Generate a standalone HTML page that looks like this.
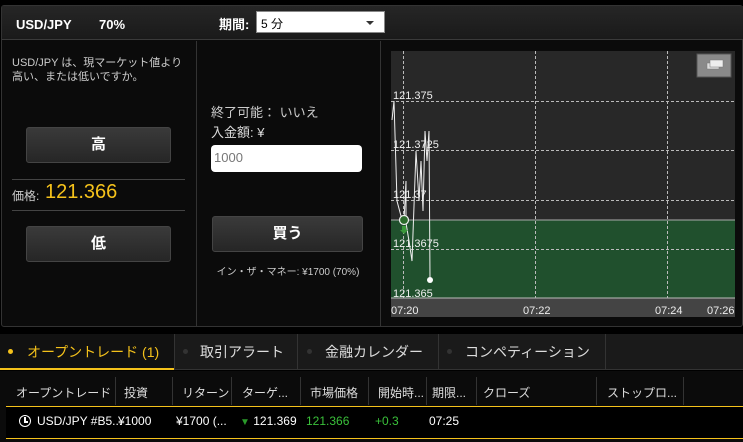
<!DOCTYPE html>
<html><head><meta charset="utf-8"><style>
*{box-sizing:border-box;margin:0;padding:0}
body{width:743px;height:442px;background:#000;font-family:"Liberation Sans","Noto Sans CJK JP",sans-serif;color:#ddd;position:relative;overflow:hidden}
.a{position:absolute}
.btn{position:absolute;background:linear-gradient(#3a3a3a,#262626);border:1px solid #444;border-radius:3px;color:#fff;font-weight:bold;font-size:15px;text-align:center}
</style></head><body>
<div class="a" style="left:1px;top:5px;width:742px;height:322px;background:#0b0b0b;border:1px solid #333;border-radius:3px"></div>
<div class="a" style="left:2px;top:6px;width:741px;height:34px;background:linear-gradient(#262626,#1a1a1a);border-bottom:1px solid #3a3a3a"></div>
<div class="a" style="left:16px;top:17px;font-size:13px;font-weight:bold;color:#fff">USD/JPY</div>
<div class="a" style="left:99px;top:17px;font-size:13px;font-weight:bold;color:#fff">70%</div>
<div class="a" style="left:219px;top:14px;font-size:13px;font-weight:bold;color:#fff">期間:</div>
<div class="a" style="left:256px;top:11px;width:129px;height:22px;background:#fff;border:1px solid #888;font-size:12px;color:#000;padding:3px 0 0 4px">5 分<span class="a" style="right:10px;top:9px;width:0;height:0;border-left:4px solid transparent;border-right:4px solid transparent;border-top:4px solid #333"></span></div>
<div class="a" style="left:196px;top:41px;width:1px;height:286px;background:#333"></div>
<div class="a" style="left:380px;top:41px;width:1px;height:286px;background:#333"></div>
<div class="a" style="left:12px;top:56px;font-size:11px;line-height:14px;color:#ccc;width:172px">USD/JPY は、現マーケット値より高い、または低いですか。</div>
<div class="btn" style="left:26px;top:127px;width:145px;height:36px;line-height:34px">高</div>
<div class="a" style="left:12px;top:179px;width:173px;height:1px;background:#444"></div>
<div class="a" style="left:12px;top:187px;font-size:12px;color:#ccc">価格:</div>
<div class="a" style="left:45px;top:181px;font-size:20px;color:#f5c21b">121.366</div>
<div class="a" style="left:12px;top:210px;width:173px;height:1px;background:#444"></div>
<div class="btn" style="left:26px;top:226px;width:145px;height:36px;line-height:34px">低</div>
<div class="a" style="left:211px;top:102px;font-size:13px;color:#ccc">終了可能： いいえ</div>
<div class="a" style="left:211px;top:122px;font-size:13px;color:#ddd">入金額: ¥</div>
<div class="a" style="left:211px;top:145px;width:151px;height:27px;background:#fff;border-radius:4px;font-size:13px;color:#777;padding:5px 0 0 3px">1000</div>
<div class="btn" style="left:212px;top:216px;width:151px;height:36px;line-height:34px">買う</div>
<div class="a" style="left:208px;top:263px;width:160px;font-size:10px;color:#ccc;text-align:center">イン・ザ・マネー: ¥1700 (70%)</div>
<svg class="a" style="left:391px;top:51px" width="344" height="266">
<rect width="344" height="266" fill="#282828"/>
<rect y="169" width="344" height="78" fill="#20502d"/>
<line x1="0" y1="169" x2="344" y2="169" stroke="#aaa"/>
<g stroke="#bbb" stroke-dasharray="3,2" stroke-width="1">
<line x1="0" y1="50.5" x2="344" y2="50.5"/><line x1="0" y1="99.5" x2="344" y2="99.5"/><line x1="0" y1="149.5" x2="344" y2="149.5"/><line x1="0" y1="198.5" x2="344" y2="198.5"/>
<line x1="12.5" y1="0" x2="12.5" y2="247"/><line x1="144.5" y1="0" x2="144.5" y2="247"/><line x1="276.5" y1="0" x2="276.5" y2="247"/>
</g>
<rect x="0" y="247" width="344" height="19" fill="#444"/>
<line x1="0" y1="247" x2="344" y2="247" stroke="#bbb"/>
<g fill="#eee" font-size="11" font-family="Liberation Sans,sans-serif">
<text x="2" y="48">121.375</text><text x="2" y="97">121.3725</text><text x="2" y="147">121.37</text><text x="2" y="196">121.3675</text><text x="2" y="246">121.365</text>
<text x="0" y="263">07:20</text><text x="132" y="263">07:22</text><text x="264" y="263">07:24</text><text x="316" y="263">07:26</text>
</g>
<polyline fill="none" stroke="#eee" stroke-width="1" points="1,69 3,50 6,150 10,165 13,170 15,130 15,172 18,190 21,210 25,100 28,150 30,110 32,160 34,80 36,110 38,80 39,228"/>
<circle cx="13" cy="169" r="4.5" fill="#2a6a2a" stroke="#eee" stroke-width="1.2"/>
<path d="M11 175h4v4h2l-4 4-4-4h2z" fill="#3a9a3a"/>
<circle cx="39" cy="229" r="3" fill="#fff"/>
<rect x="306" y="3" width="34" height="23" fill="#8a8a8a" stroke="#555"/>
<rect x="316" y="12" width="12" height="6" fill="#ddd" stroke="#777" stroke-width=".5"/>
<rect x="319" y="9" width="13" height="7" fill="#eee" stroke="#777" stroke-width=".5"/>
</svg>
<div class="a" style="left:0;top:334px;width:743px;height:36px;background:#1a1a1a;border-bottom:1px solid #333"></div>
<div class="a" style="left:0;top:334px;width:174px;height:36px;background:#111;border-bottom:2px solid #f5c21b"></div>
<div class="a" style="left:174px;top:334px;width:1px;height:36px;background:#333"></div>
<div class="a" style="left:297px;top:334px;width:1px;height:36px;background:#333"></div>
<div class="a" style="left:438px;top:334px;width:1px;height:36px;background:#333"></div>
<div class="a" style="left:605px;top:334px;width:1px;height:36px;background:#333"></div>
<div class="a" style="left:8px;top:349px;width:5px;height:5px;border-radius:50%;background:#f5c21b"></div>
<div class="a" style="left:27px;top:342px;font-size:14px;color:#f5c21b">オープントレード (1)</div>
<div class="a" style="left:183px;top:349px;width:5px;height:5px;border-radius:50%;background:#333"></div>
<div class="a" style="left:200px;top:342px;font-size:14px;color:#ddd">取引アラート</div>
<div class="a" style="left:307px;top:349px;width:5px;height:5px;border-radius:50%;background:#333"></div>
<div class="a" style="left:325px;top:342px;font-size:14px;color:#ddd">金融カレンダー</div>
<div class="a" style="left:447px;top:349px;width:5px;height:5px;border-radius:50%;background:#333"></div>
<div class="a" style="left:465px;top:342px;font-size:14px;color:#ddd">コンペティーション</div>
<div class="a" style="left:0;top:371px;width:743px;height:71px;background:#0b0b0b"></div>
<div style="font-size:12px;color:#ddd">
<div class="a" style="left:16px;top:384px">オープントレード</div>
<div class="a" style="left:124px;top:384px">投資</div>
<div class="a" style="left:182px;top:384px">リターン</div>
<div class="a" style="left:242px;top:384px">ターゲ...</div>
<div class="a" style="left:310px;top:384px">市場価格</div>
<div class="a" style="left:378px;top:384px">開始時...</div>
<div class="a" style="left:432px;top:384px">期限...</div>
<div class="a" style="left:483px;top:384px">クローズ</div>
<div class="a" style="left:607px;top:384px">ストップロ...</div>
</div>
<div class="a" style="left:115px;top:377px;width:1px;height:28px;background:#333"></div>
<div class="a" style="left:172px;top:377px;width:1px;height:28px;background:#333"></div>
<div class="a" style="left:231px;top:377px;width:1px;height:28px;background:#333"></div>
<div class="a" style="left:300px;top:377px;width:1px;height:28px;background:#333"></div>
<div class="a" style="left:368px;top:377px;width:1px;height:28px;background:#333"></div>
<div class="a" style="left:426px;top:377px;width:1px;height:28px;background:#333"></div>
<div class="a" style="left:476px;top:377px;width:1px;height:28px;background:#333"></div>
<div class="a" style="left:596px;top:377px;width:1px;height:28px;background:#333"></div>
<div class="a" style="left:683px;top:377px;width:1px;height:28px;background:#333"></div>
<div class="a" style="left:6px;top:406px;width:737px;height:33px;background:#000;border-top:1px solid #f5c21b;border-bottom:1px solid #f5c21b"></div>
<div class="a" style="left:19px;top:415px;width:12px;height:12px;border:1.5px solid #fff;border-radius:50%"></div>
<div class="a" style="left:24px;top:417px;width:1.5px;height:5px;background:#fff"></div>
<div class="a" style="left:24px;top:421px;width:4px;height:1.5px;background:#fff"></div>
<div style="font-size:12px" >
<div class="a" style="left:37px;top:414px;color:#fff">USD/JPY #B5...</div>
<div class="a" style="left:118px;top:414px;color:#fff">¥1000</div>
<div class="a" style="left:176px;top:414px;color:#fff">¥1700 (...</div>
<div class="a" style="left:240px;top:414px;color:#fff"><span style="color:#2a9a2a;font-size:10px">▼</span> 121.369</div>
<div class="a" style="left:306px;top:414px;color:#3ac03a">121.366</div>
<div class="a" style="left:375px;top:414px;color:#3ac03a">+0.3</div>
<div class="a" style="left:429px;top:414px;color:#fff">07:25</div>
</div>
</body></html>
